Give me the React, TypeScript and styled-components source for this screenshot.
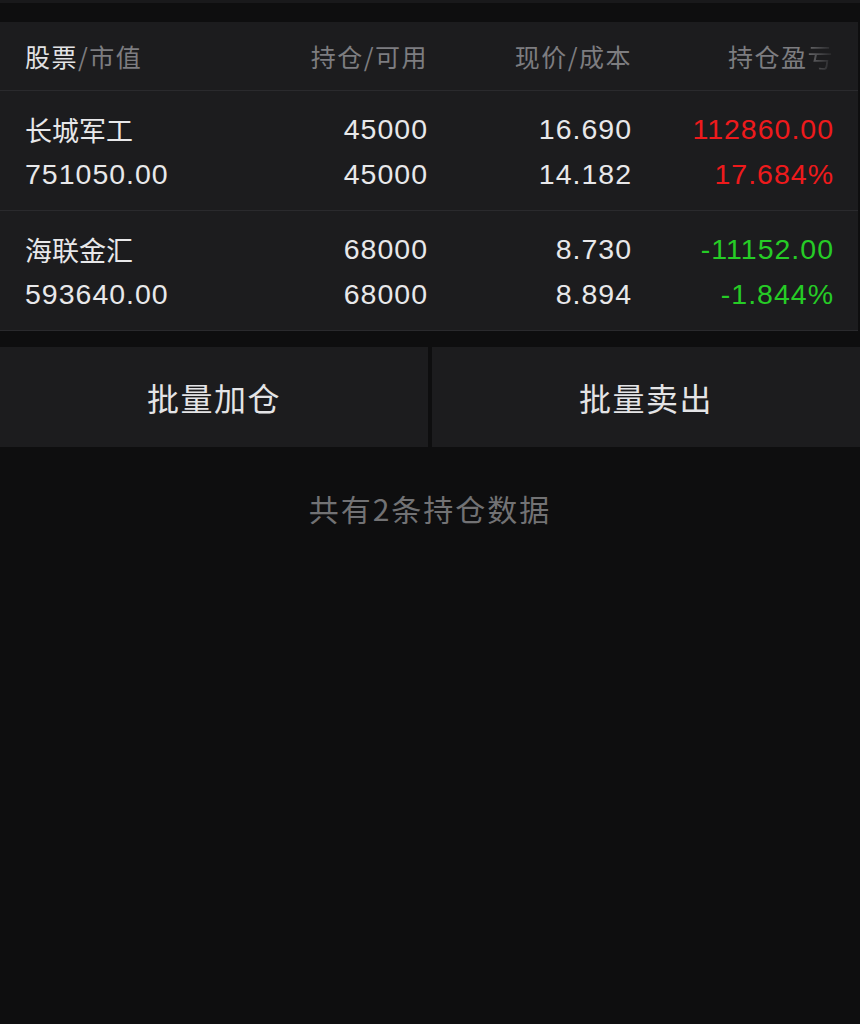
import React from "react";
import styled, { createGlobalStyle } from "styled-components";

const GlobalStyle = createGlobalStyle`
  html, body {
    margin: 0;
    padding: 0;
    background: #0e0e0f;
  }
  body {
    font-family: "Liberation Sans", "Noto Sans CJK SC", sans-serif;
    -webkit-font-smoothing: antialiased;
  }
`

const Page = styled.div`
  width: 860px;
  min-height: 1024px;
  background: #0e0e0f;
  display: flex;
  flex-direction: column;
`

const TopStrip = styled.div`
  height: 3px;
  background: #19191b;
  margin-bottom: 19px;
`

const Table = styled.div`
  background: #1c1c1e;
  margin-right: 2px;
`

const Row = styled.div<{ $header?: boolean }>`
  display: grid;
  grid-template-columns: 1fr 208px 204px 202px;
  padding: ${p => p.$header ? "0 24px 0 25px" : "16px 24px 13px 25px"};
  height: ${p => p.$header ? "68px" : "auto"};
  align-items: center;
  border-bottom: 1px solid #2a2a2d;
`

const Cell = styled.div<{ $right?: boolean }>`
  display: flex;
  flex-direction: column;
  align-items: ${p => p.$right ? "flex-end" : "flex-start"};
`

const HeadText = styled.div`
  font-family: "Noto Sans CJK SC", sans-serif;
  font-size: 25px;
  letter-spacing: 1.5px;
  color: #7d7d80;
  white-space: nowrap;
`

const HeadMain = styled.span`
  color: #e2e2e4;
`

const Fade = styled.span`
  background: linear-gradient(90deg, #6a6a6d 0%, rgba(40, 40, 42, 0.4) 100%);
  -webkit-background-clip: text;
  background-clip: text;
  color: transparent;
`

const Line = styled.div<{ $tone?: "up" | "down" }>`
  font-family: "Liberation Sans", "Noto Sans CJK SC", sans-serif;
  font-size: 28.5px;
  letter-spacing: 1px;
  line-height: 45px;
  height: 45px;
  white-space: nowrap;
  color: ${p => p.$tone === "up" ? "#ee1a1c" : p.$tone === "down" ? "#26cc26" : "#e8e8ea"};
`

const Name = styled(Line)`
  font-family: "Noto Sans CJK SC", sans-serif;
  font-size: 27px;
  letter-spacing: 0;
`

const Actions = styled.div`
  display: grid;
  grid-template-columns: 428px 1fr;
  column-gap: 4px;
  margin-top: 16px;
`

const ActionButton = styled.button`
  height: 100px;
  border: none;
  background: #1c1c1e;
  color: #e4e4e6;
  font-family: "Noto Sans CJK SC", sans-serif;
  font-size: 32px;
  letter-spacing: 1.5px;
  cursor: pointer;
  padding: 0;
`

const Summary = styled.div`
  text-align: center;
  margin-top: 39px;
  font-family: "Noto Sans CJK SC", sans-serif;
  font-size: 30px;
  letter-spacing: 2px;
  color: #727274;
`

interface Holding {
  name: string;
  value: string;
  qty: string;
  avail: string;
  price: string;
  cost: string;
  pnl: string;
  pnlPct: string;
}

const holdings: Holding[] = [
  { name: "长城军工", value: "751050.00", qty: "45000", avail: "45000", price: "16.690", cost: "14.182", pnl: "112860.00", pnlPct: "17.684%" },
  { name: "海联金汇", value: "593640.00", qty: "68000", avail: "68000", price: "8.730", cost: "8.894", pnl: "-11152.00", pnlPct: "-1.844%" },
];

export default function App(): JSX.Element {
  return (
    <Page>
      <GlobalStyle />
      <TopStrip />
      <Table>
        <Row $header>
          <Cell><HeadText><HeadMain>股票</HeadMain>/市值</HeadText></Cell>
          <Cell $right><HeadText>持仓/可用</HeadText></Cell>
          <Cell $right><HeadText>现价/成本</HeadText></Cell>
          <Cell $right><HeadText>持仓盈<Fade>亏</Fade></HeadText></Cell>
        </Row>
        {holdings.map(h => {
          const tone = h.pnl.startsWith("-") ? "down" : "up";
          return (
            <Row key={h.name}>
              <Cell>
                <Name>{h.name}</Name>
                <Line>{h.value}</Line>
              </Cell>
              <Cell $right>
                <Line>{h.qty}</Line>
                <Line>{h.avail}</Line>
              </Cell>
              <Cell $right>
                <Line>{h.price}</Line>
                <Line>{h.cost}</Line>
              </Cell>
              <Cell $right>
                <Line $tone={tone}>{h.pnl}</Line>
                <Line $tone={tone}>{h.pnlPct}</Line>
              </Cell>
            </Row>
          );
        })}
      </Table>
      <Actions>
        <ActionButton>批量加仓</ActionButton>
        <ActionButton>批量卖出</ActionButton>
      </Actions>
      <Summary>共有2条持仓数据</Summary>
    </Page>
  );
}
